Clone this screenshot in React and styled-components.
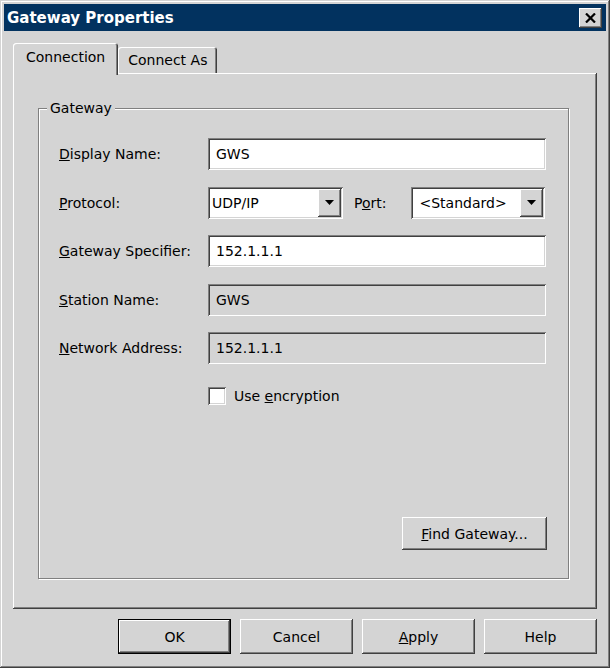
import React from 'react';
import styled, { createGlobalStyle } from 'styled-components';

const face = '#d4d4d4';

const GlobalStyle = createGlobalStyle`
  html, body {
    margin: 0;
    padding: 0;
    background: ${face};
  }
  body {
    font-family: "DejaVu Sans", Tahoma, sans-serif;
    font-size: 14px;
    color: #000;
  }
`;

// raised / sunken bevels in the classic style
const raised = `
  box-shadow:
    inset -1px -1px #404040,
    inset 1px 1px #fff,
    inset -2px -2px #808080,
    inset 2px 2px ${face};
`;

const sunken = `
  box-shadow:
    inset 1px 1px #808080,
    inset -1px -1px #fff,
    inset 2px 2px #404040,
    inset -2px -2px ${face};
`;

const Window = styled.div`
  box-sizing: border-box;
  width: 610px;
  height: 668px;
  padding: 4px;
  display: flex;
  flex-direction: column;
  background: ${face};
  box-shadow:
    inset -1px -1px #404040,
    inset 1px 1px ${face},
    inset -2px -2px #808080,
    inset 2px 2px #fff;
`;

const TitleBar = styled.div`
  height: 27px;
  flex: none;
  display: flex;
  align-items: center;
  justify-content: space-between;
  padding: 0 4px 0 3px;
  background: #02325f;
`;

const Title = styled.div`
  color: #fff;
  font-weight: bold;
  font-size: 15px;
`;

const CloseButton = styled.div`
  width: 23px;
  height: 20px;
  background: ${face};
  display: flex;
  align-items: center;
  justify-content: center;
  ${raised}
`;

const Body = styled.div`
  flex: 1;
  display: flex;
  flex-direction: column;
  padding: 12px 9px 10px 9px;
`;

const TabStrip = styled.div`
  display: flex;
  align-items: flex-end;
  height: 30px;
  position: relative;
  z-index: 1;
`;

const Tab = styled.div`
  box-sizing: border-box;
  height: ${p => (p.$active ? 32 : 26)}px;
  margin-bottom: ${p => (p.$active ? -2 : 0)}px;
  padding: 0 ${p => (p.$active ? 13 : 10)}px ${p => (p.$active ? 4 : 0)}px;
  display: flex;
  align-items: center;
  background: ${face};
  border-radius: 3px 3px 0 0;
  box-shadow:
    inset 1px 1px #fff,
    inset -1px 0 #404040,
    inset -2px 0 #808080;
`;

const Pane = styled.div`
  flex: 1;
  display: flex;
  flex-direction: column;
  padding: 27px 28px 30px 25px;
  ${raised}
`;

const Group = styled.fieldset`
  flex: 1;
  margin: 0;
  padding: 21px 22px 28px 20px;
  border: 1px solid #808080;
  box-shadow: inset 1px 1px #fff, 1px 1px #fff;
  display: flex;
  flex-direction: column;
`;

const Legend = styled.legend`
  padding: 0 3px;
  margin-left: -12px;
  line-height: 17px;
  background: ${face};
`;

const Form = styled.div`
  display: grid;
  grid-template-columns: 149px 1fr;
  row-gap: 16.5px;
  align-items: center;
`;

const Label = styled.div`
  white-space: nowrap;
`;

const TextBox = styled.div`
  box-sizing: border-box;
  height: 32px;
  padding: 0 8px;
  display: flex;
  align-items: center;
  background: ${p => (p.$disabled ? face : '#fff')};
  ${sunken}
`;

const ComboRow = styled.div`
  display: flex;
  align-items: center;
`;

const Combo = styled.div`
  box-sizing: border-box;
  width: ${p => p.$width}px;
  height: 32px;
  padding: 2px 2px 2px ${p => p.$indent}px;
  display: flex;
  align-items: center;
  background: #fff;
  ${sunken}
`;

const ComboText = styled.div`
  flex: 1;
`;

const DropButton = styled.div`
  width: 23px;
  height: 28px;
  background: ${face};
  display: flex;
  align-items: center;
  justify-content: center;
  ${raised}
`;

const PortLabel = styled.div`
  margin: 0 24px 0 11px;
`;

const CheckRow = styled.label`
  display: flex;
  align-items: center;
  gap: 8px;
  margin: 23px 0 0 149px;
`;

const CheckBox = styled.span`
  width: 18px;
  height: 18px;
  background: #fff;
  ${sunken}
`;

const Button = styled.div`
  box-sizing: border-box;
  width: ${p => p.$width}px;
  height: ${p => p.$height}px;
  display: flex;
  align-items: center;
  justify-content: center;
  background: ${face};
  ${raised}
  ${p => p.$default && `
    box-shadow:
      inset 0 0 0 1px #000,
      inset -2px -2px #404040,
      inset 2px 2px #fff,
      inset -3px -3px #808080;
  `}
`;

const FindRow = styled.div`
  margin-top: auto;
  display: flex;
  justify-content: flex-end;
  margin-right: -1px;
`;

const ButtonRow = styled.div`
  display: flex;
  justify-content: flex-end;
  gap: 9px;
  margin-top: 10px;
`;

function Arrow() {
  return (
    <svg width="9" height="5" viewBox="0 0 9 5">
      <path d="M0 0h9L4.5 5z" fill="#000" />
    </svg>
  );
}

function Dropdown({ width, indent, value }) {
  return (
    <Combo $width={width} $indent={indent}>
      <ComboText>{value}</ComboText>
      <DropButton>
        <Arrow />
      </DropButton>
    </Combo>
  );
}

export default function App() {
  return (
    <>
      <GlobalStyle />
      <Window>
        <TitleBar>
          <Title>Gateway Properties</Title>
          <CloseButton>
            <svg width="11" height="10" viewBox="0 0 11 10">
              <path d="M1 0.5l9 9M10 0.5l-9 9" stroke="#000" strokeWidth="2.2" />
            </svg>
          </CloseButton>
        </TitleBar>
        <Body>
          <TabStrip>
            <Tab $active>Connection</Tab>
            <Tab>Connect As</Tab>
          </TabStrip>
          <Pane>
            <Group>
              <Legend>Gateway</Legend>
              <Form>
                <Label><u>D</u>isplay Name:</Label>
                <TextBox>GWS</TextBox>

                <Label><u>P</u>rotocol:</Label>
                <ComboRow>
                  <Dropdown width={135} indent={4} value="UDP/IP" />
                  <PortLabel>P<u>o</u>rt:</PortLabel>
                  <Dropdown width={134} indent={9} value="<Standard>" />
                </ComboRow>

                <Label><u>G</u>ateway Specifier:</Label>
                <TextBox>152.1.1.1</TextBox>

                <Label><u>S</u>tation Name:</Label>
                <TextBox $disabled>GWS</TextBox>

                <Label><u>N</u>etwork Address:</Label>
                <TextBox $disabled>152.1.1.1</TextBox>
              </Form>
              <CheckRow>
                <CheckBox />
                <span>Use <u>e</u>ncryption</span>
              </CheckRow>
              <FindRow>
                <Button $width={145} $height={33}><span><u>F</u>ind Gateway...</span></Button>
              </FindRow>
            </Group>
          </Pane>
          <ButtonRow>
            <Button $width={113} $height={35} $default>OK</Button>
            <Button $width={113} $height={35}>Cancel</Button>
            <Button $width={113} $height={35}><span><u>A</u>pply</span></Button>
            <Button $width={113} $height={35}>Help</Button>
          </ButtonRow>
        </Body>
      </Window>
    </>
  );
}
